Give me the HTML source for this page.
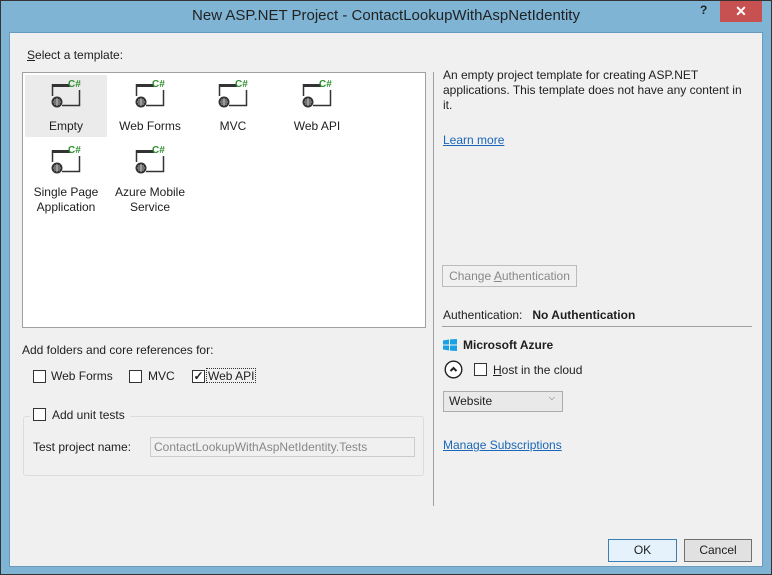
<!DOCTYPE html><html><head><style>
*{margin:0;padding:0;box-sizing:border-box}
body{width:772px;height:575px;background:#7fb4d4;font-family:"Liberation Sans",sans-serif;font-size:12px;color:#1e1e1e;position:relative;overflow:hidden}
.a{position:absolute}
.frame{left:0;top:0;width:772px;height:575px;border:1px solid #333}
.client{left:9px;top:32px;width:754px;height:535px;background:#f0f0f0;border:1px solid #6a9bbf}
.cb{width:13px;height:13px;border:1px solid #333;background:#fff}
.lbl{white-space:nowrap}
.tile{text-align:center;width:82px}
a{color:#1a66b8;text-decoration:underline}
.btn{border:1px solid #adadad;background:#e1e1e1;text-align:center;line-height:20px}
</style></head><body>
<div class="a frame"></div>
<div class="a" style="left:0;top:0;width:772px;height:32px;text-align:center;line-height:32px;font-size:15px;color:#222">New ASP.NET Project - ContactLookupWithAspNetIdentity</div>
<div class="a" style="left:700px;top:3px;font-weight:bold;font-size:12px;color:#222">?</div>
<div class="a" style="left:720px;top:1px;width:42px;height:21px;background:#c75050;color:#fff;text-align:center;line-height:21px;font-size:14px;font-weight:bold">✕</div>
<div class="a client"></div>
<div class="a lbl" style="left:27px;top:48px"><u>S</u>elect a template:</div>
<div class="a" style="left:22px;top:72px;width:404px;height:256px;background:#fff;border:1px solid #a0a0a0"></div>
<div class="a" style="left:25px;top:75px;width:82px;height:62px;background:#ebebeb"></div>
<svg class="a" style="left:0;top:0" width="772" height="575">
<defs><g id="ic">
<path d="M0 1.5H18" stroke="#333" stroke-width="3"/>
<path d="M0.5 0V12M27.5 6V21.5H10" stroke="#333" stroke-width="1.5" fill="none"/>
<text x="16" y="3" font-family="Liberation Sans" font-weight="bold" font-size="10" fill="#2f8f2f">C#</text>
<circle cx="5" cy="18" r="5.5" fill="#333"/>
<path d="M1 18H9M5 14V22M2 16H8M2 20H8" stroke="#ddd" stroke-width="0.8"/>
</g></defs>
<use href="#ic" x="52" y="84"/><use href="#ic" x="136" y="84"/><use href="#ic" x="219" y="84"/><use href="#ic" x="303" y="84"/>
<use href="#ic" x="52" y="150"/><use href="#ic" x="136" y="150"/>
</svg>
<div class="a tile" style="left:25px;top:119px">Empty</div>
<div class="a tile" style="left:109px;top:119px">Web Forms</div>
<div class="a tile" style="left:192px;top:119px">MVC</div>
<div class="a tile" style="left:276px;top:119px">Web API</div>
<div class="a tile" style="left:25px;top:185px;line-height:15px">Single Page<br>Application</div>
<div class="a tile" style="left:109px;top:185px;line-height:15px">Azure Mobile<br>Service</div>

<div class="a lbl" style="left:22px;top:343px">Add folders and core references for:</div>
<div class="a cb" style="left:33px;top:370px"></div><div class="a lbl" style="left:51px;top:369px">Web Forms</div>
<div class="a cb" style="left:129px;top:370px"></div><div class="a lbl" style="left:148px;top:369px">MVC</div>
<div class="a cb" style="left:192px;top:370px;font-size:12px;line-height:10px;font-weight:bold;text-align:center">✓</div>
<div class="a lbl" style="left:206px;top:368px;border:1px dotted #333;padding:0 1px;height:15px;width:50px;overflow:hidden">Web API</div>
<div class="a" style="left:23px;top:416px;width:401px;height:60px;border:1px solid #dcdcdc;border-radius:3px"></div>
<div class="a" style="left:30px;top:406px;width:100px;height:16px;background:#f0f0f0"></div>
<div class="a cb" style="left:33px;top:408px"></div><div class="a lbl" style="left:52px;top:408px">Add unit tests</div>
<div class="a lbl" style="left:33px;top:440px">Test project name:</div>
<div class="a lbl" style="left:150px;top:437px;width:265px;height:20px;border:1px solid #ccc;color:#888;padding:2px 3px">ContactLookupWithAspNetIdentity.Tests</div>

<div class="a" style="left:433px;top:72px;width:1px;height:434px;background:#a0a0a0"></div>
<div class="a" style="left:443px;top:68px;width:300px;line-height:15px">An empty project template for creating ASP.NET applications. This template does not have any content in it.</div>
<div class="a lbl" style="left:443px;top:133px"><a>Learn more</a></div>
<div class="a lbl" style="left:442px;top:265px;width:135px;height:22px;border:1px solid #bcbcbc;color:#888;text-align:center;line-height:20px">Change <u>A</u>uthentication</div>
<div class="a lbl" style="left:443px;top:308px">Authentication:&nbsp;&nbsp;&nbsp;<b>No Authentication</b></div>
<div class="a" style="left:442px;top:326px;width:310px;height:1px;background:#a0a0a0"></div>
<svg class="a" style="left:443px;top:339px" width="14" height="12"><path d="M0 1.5L6 0.5V5.5H0ZM7 0.4L14 0V5.5H7ZM0 6.5H6V11.5L0 10.5ZM7 6.5H14V12L7 11.6Z" fill="#1ba1e2"/></svg>
<div class="a lbl" style="left:463px;top:338px;font-weight:bold">Microsoft Azure</div>
<svg class="a" style="left:444px;top:360px" width="20" height="20"><circle cx="9.5" cy="9.5" r="8.3" fill="#fff" stroke="#222" stroke-width="1.4"/><path d="M6.5 11L9.5 8L12.5 11" stroke="#222" stroke-width="2" fill="none"/></svg>
<div class="a cb" style="left:474px;top:363px"></div><div class="a lbl" style="left:493px;top:363px"><u>H</u>ost in the cloud</div>
<div class="a lbl" style="left:443px;top:391px;width:120px;height:21px;border:1px solid #acacac;background:#e9e9e9;padding:2px 5px">Website<span style="position:absolute;right:7px;top:1px;font-size:8px;color:#555">⌵</span></div>
<div class="a lbl" style="left:443px;top:438px"><a>Manage Subscriptions</a></div>
<div class="a btn" style="left:608px;top:539px;width:69px;height:23px;border-color:#3c7fb1;background:#e5f1fb">OK</div>
<div class="a btn" style="left:684px;top:539px;width:68px;height:23px;border-color:#707070">Cancel</div>
</body></html>
